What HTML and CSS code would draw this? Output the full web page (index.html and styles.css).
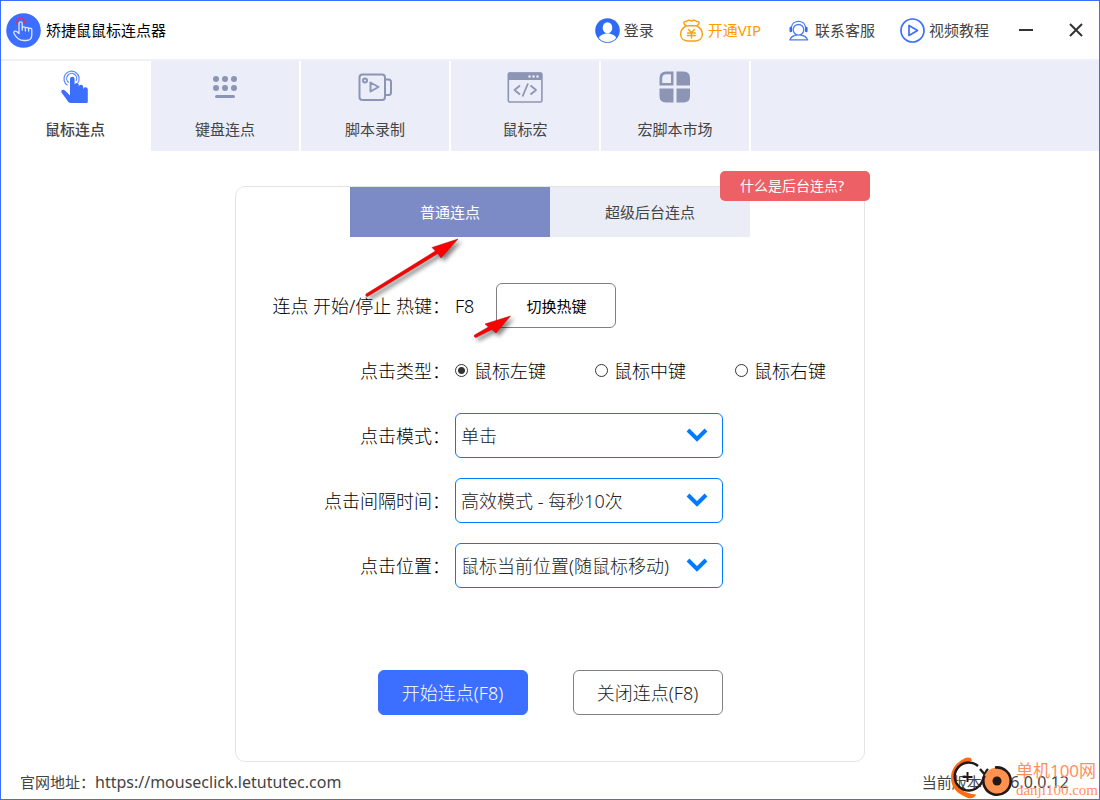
FILE: index.html
```html
<!DOCTYPE html>
<html lang="zh-CN">
<head>
<meta charset="utf-8">
<title>矫捷鼠鼠标连点器</title>
<link rel="stylesheet" href="styles.css">
</head>
<body>
<div class="window">
  <header class="titlebar">
    <svg class="logo" viewBox="0 0 35 35" aria-hidden="true">
      <circle cx="17.5" cy="17.5" r="17.3" fill="#3c6eff"/>
      <path d="M11.500 11.500a4 4 0 1 1 7-1" fill="none" stroke="#e0315c" stroke-width="1.300"/>
      <path d="M13 20.500V10.500a1.600 1.600 0 0 1 3.200 0V17M16.200 15.500a1.600 1.600 0 0 1 3.200 0V18M19.400 16a1.600 1.600 0 0 1 3.200 0V18M22.600 16.500a1.600 1.600 0 0 1 3.200 .500V22C25.800 25.500 24 27.500 20 27.500H18C14 27.500 10 24.500 8 20.500C7 18.500 9.500 17.500 11 18.800L13 20.500" fill="none" stroke="#dfe8ff" stroke-width="1.300" stroke-linejoin="round" stroke-linecap="round"/>
    </svg>
    <h1 class="app-name">矫捷鼠鼠标连点器</h1>
    <nav class="links">
      <a class="link" href="#login">
        <svg class="link-icon" viewBox="0 0 25 25" aria-hidden="true">
          <circle cx="12.500" cy="12.500" r="12.300" fill="#2f6bf2"/>
          <ellipse cx="12.500" cy="9.800" rx="4.800" ry="5.600" fill="#fff"/>
          <path d="M3.800 20C5 17.200 7.500 16.300 10.500 15.500H14.500C17.500 16.300 20 17.200 21.200 20C19 22.800 16 24 12.500 24S6 22.800 3.800 20Z" fill="#fff"/>
        </svg>登录</a>
      <a class="link link-vip" href="#vip">
        <svg class="link-icon" viewBox="0 0 25 25" fill="none" stroke="#f9a11b" stroke-width="1.500" stroke-linecap="round" stroke-linejoin="round" aria-hidden="true">
          <path d="M7.500 7.800C3.500 5.500 4.500 3 7.500 3.600C8.500 1.800 10.800 1.800 12.500 3C14.500 1.800 16.500 1.800 17.500 3.600C20.500 3 21.500 5.500 17.500 7.800ZM7 8C3.500 10 1.600 12.600 1.600 16C1.600 20.500 5 23 9 23H16C20 23 23.400 20.500 23.400 16C23.400 12.600 21.500 10 18 8"/>
          <path d="M9.500 11.500L12.500 14.500L15.500 11.500M8.500 15H16.500M8.500 17.500H16.500M12.500 14.500V20"/>
        </svg>开通VIP</a>
      <a class="link" href="#service">
        <svg class="link-icon" viewBox="0 0 25 25" fill="none" stroke="#4a7cf0" stroke-width="1.300" stroke-linecap="round" aria-hidden="true">
          <circle cx="12.500" cy="11.800" r="5.300"/>
          <path d="M5.500 9C6.500 1.500 18.500 1.500 19.500 9M4 21.600C5 18.800 7.500 17.500 10.500 17M14.500 17C17.500 17.500 20.500 18.800 21.500 21.600M3.800 21.800H21.800"/>
          <path d="M4.800 10V13M20.300 10V13" stroke="#2f6bf2" stroke-width="2.600"/>
        </svg>联系客服</a>
      <a class="link" href="#video">
        <svg class="link-icon" viewBox="0 0 25 25" fill="none" stroke="#3c6eff" stroke-width="1.700" stroke-linejoin="round" aria-hidden="true">
          <circle cx="12.500" cy="12.500" r="11.500"/>
          <path d="M9 7.500V17.500L17.500 12.500Z"/>
        </svg>视频教程</a>
    </nav>
    <div class="window-controls">
      <button class="control" type="button" aria-label="最小化">
        <svg class="control-icon" viewBox="0 0 16 16" aria-hidden="true"><path d="M1 8H15" stroke="#333" stroke-width="2"/></svg>
      </button>
      <button class="control" type="button" aria-label="关闭">
        <svg class="control-icon" viewBox="0 0 16 16" aria-hidden="true"><path d="M2 2L14 14M14 2L2 14" stroke="#333" stroke-width="2"/></svg>
      </button>
    </div>
  </header>

  <nav class="tabs">
    <button class="tab tab-active" type="button">
      <svg class="tab-icon" viewBox="0 0 36 36" aria-hidden="true">
        <g fill="none" stroke="#5a85ff" stroke-width="1.200">
          <path d="M10.500 16.200A7.600 7.600 0 1 1 20.500 14.500"/>
          <path d="M11.800 13.500A5 5 0 1 1 19 12"/>
        </g>
        <path d="M13 10a2.300 2.300 0 0 1 4.600 0V18.500V15.500a2.200 2.200 0 0 1 4.200 0V20V18a2.200 2.200 0 0 1 4.400 0V21.500V20.500a2.200 2.200 0 0 1 4.600 0V32C30.800 33.500 30.500 34 29.500 34H14C12 34 11 33 10 31L4.500 23.500C3.200 21 6.500 20 8 21.500L13 26.500Z" fill="#3c6eff"/>
      </svg>
      <span>鼠标连点</span>
    </button>
    <button class="tab" type="button">
      <svg class="tab-icon" viewBox="0 0 36 36" fill="#8d95b5" aria-hidden="true">
        <circle cx="9" cy="10" r="3"/><circle cx="18" cy="10" r="3"/><circle cx="27" cy="10" r="3"/>
        <circle cx="9" cy="19" r="3"/><circle cx="18" cy="19" r="3"/><circle cx="27" cy="19" r="3"/>
        <rect x="8" y="26" width="20" height="3" rx="1.500"/>
      </svg>
      <span>键盘连点</span>
    </button>
    <button class="tab" type="button">
      <svg class="tab-icon" viewBox="0 0 36 36" fill="none" stroke="#8d95b5" stroke-width="2" stroke-linejoin="round" aria-hidden="true">
        <rect x="2.500" y="5.500" width="25.500" height="25.500" rx="3"/>
        <circle cx="8" cy="11.500" r="2"/>
        <path d="M13.500 13.500V22.500L21.500 18Z"/>
        <path d="M28 10.500H31.500Q34 10.500 34 13V23.500Q34 26 31.500 26H28"/>
      </svg>
      <span>脚本录制</span>
    </button>
    <button class="tab" type="button">
      <svg class="tab-icon" viewBox="0 0 36 36" fill="none" stroke="#8d95b5" stroke-width="1.600" stroke-linejoin="round" aria-hidden="true">
        <rect x="1.300" y="4" width="33.600" height="29" rx="1.500"/>
        <path d="M1 4.500Q1 3.500 2.500 3.500H33.500Q35 3.500 35 4.500V11H1Z" fill="#8d95b5" stroke="none"/>
        <g fill="#fff" stroke="none"><rect x="21.500" y="6.500" width="2" height="2"/><rect x="25.500" y="6.500" width="2" height="2"/><rect x="29.500" y="6.500" width="2" height="2"/></g>
        <path d="M13 16.500L7.500 21L13 25.500M23.500 16.500L29 21L23.500 25.500M21 14.500L15.500 27.500" stroke-width="1.800"/>
      </svg>
      <span>鼠标宏</span>
    </button>
    <button class="tab" type="button">
      <svg class="tab-icon" viewBox="0 0 36 36" fill="#8d95b5" aria-hidden="true">
        <path fill-rule="evenodd" d="M9 2.500H16.500V16.500H2.500V9Q2.500 2.500 9 2.500ZM9.500 5.200Q5.200 5.200 5.200 9.500V14H14V5.200Z"/>
        <path d="M19.500 2.500H26.500Q33 2.500 33 9V16.500H19.500ZM2.500 19.500H16.500V33.500H9Q2.500 33.500 2.500 27ZM19.500 19.500H33V27Q33 33.500 26.500 33.500H19.500Z"/>
      </svg>
      <span>宏脚本市场</span>
    </button>
  </nav>

  <main class="main">
    <section class="card">
      <div class="modes">
        <button class="mode mode-active" type="button">普通连点</button>
        <button class="mode" type="button">超级后台连点</button>
      </div>
      <button class="help-badge" type="button">什么是后台连点?</button>

      <form class="form">
        <div class="row">
          <span class="label">连点 开始/停止 热键：</span>
          <div class="field hotkey">
            <span>F8</span>
            <button class="button button-small" type="button">切换热键</button>
          </div>
        </div>
        <div class="row" role="radiogroup" aria-labelledby="type-label">
          <span class="label" id="type-label">点击类型：</span>
          <div class="field radios">
            <label class="radio"><input type="radio" name="type" checked>鼠标左键</label>
            <label class="radio"><input type="radio" name="type">鼠标中键</label>
            <label class="radio"><input type="radio" name="type">鼠标右键</label>
          </div>
        </div>
        <div class="row">
          <label class="label" for="mode">点击模式：</label>
          <div class="field select-box">
            <select class="select" id="mode"><option>单击</option></select>
            <svg class="chevron" viewBox="0 0 22 14" aria-hidden="true"><path d="M2 2L11 11L20 2" fill="none" stroke="#007bff" stroke-width="4"/></svg>
          </div>
        </div>
        <div class="row">
          <label class="label" for="interval">点击间隔时间：</label>
          <div class="field select-box">
            <select class="select" id="interval"><option>高效模式 - 每秒10次</option></select>
            <svg class="chevron" viewBox="0 0 22 14" aria-hidden="true"><path d="M2 2L11 11L20 2" fill="none" stroke="#007bff" stroke-width="4"/></svg>
          </div>
        </div>
        <div class="row">
          <label class="label" for="position">点击位置：</label>
          <div class="field select-box">
            <select class="select" id="position"><option>鼠标当前位置(随鼠标移动)</option></select>
            <svg class="chevron" viewBox="0 0 22 14" aria-hidden="true"><path d="M2 2L11 11L20 2" fill="none" stroke="#007bff" stroke-width="4"/></svg>
          </div>
        </div>
        <div class="actions">
          <button class="button button-primary" type="button">开始连点(F8)</button>
          <button class="button" type="button">关闭连点(F8)</button>
        </div>
      </form>

      <svg class="arrows" viewBox="0 0 300 170" aria-hidden="true">
        <g fill="#ff0000" stroke="#a01010" stroke-width="0.500" stroke-linejoin="round">
          <path d="M130 107L199.500 64L196 60.500L222 52L205 71L202 66.500L131.500 109.500Q129 109.500 130 107Z"/>
          <path d="M238.500 148L252.500 140L249 137L274.500 129L260 146L256 142.500L240 150.500Q237.500 150.500 238.500 148Z"/>
        </g>
      </svg>
    </section>
  </main>

  <footer class="footer">
    <span>官网地址：<a class="site" href="https://mouseclick.letututec.com">https://mouseclick.letututec.com</a></span>
    <span>当前版本： <span class="version">V6.0.0.12</span></span>
  </footer>

  <div class="watermark">
    <svg class="watermark-logo" viewBox="0 0 64 42" fill="none" aria-hidden="true">
      <path d="M21 1C17 -0.500 14 1 9 5C2 10 0 18 1.500 25C3 33 10 38 18 41C22 42 25 40 26 37.500C15 37 6 31 5.500 21C5 12 11 6 22 4Z" fill="#ff6a13"/>
      <path d="M28 9A14 14 0 1 0 29 29" stroke="#231815" stroke-width="2.400"/>
      <path d="M17.500 15V25M12.500 20H22.500" stroke="#231815" stroke-width="2"/>
      <path d="M30 12L36 19M29 29C34 25 33 17 38 12" stroke="#231815" stroke-width="2.400"/>
      <circle cx="47" cy="24" r="13.500" fill="#ff924f"/>
      <path d="M45 10.500A13.700 13.700 0 1 1 34.500 18.500" stroke="#231815" stroke-width="2.600"/>
      <circle cx="47" cy="24" r="4.500" fill="#231815"/>
    </svg>
    <div class="watermark-text">
      <span class="watermark-name">单机100网</span>
      <span class="watermark-url">danji100.com</span>
    </div>
  </div>
</div>
</body>
</html>
```
FILE: styles.css
```css
* {
  box-sizing: border-box;
}

body {
  margin: 0;
  background: #fff;
  color: #444;
  font-family: "Noto Sans", "Noto Sans CJK SC", sans-serif;
  font-size: 15px;
  line-height: 20px;
}

button,
select {
  font: inherit;
  color: inherit;
  cursor: pointer;
}

.window {
  position: relative;
  display: flex;
  flex-direction: column;
  min-height: 100vh;
  border: 1px solid #3c6eff;
}

.titlebar {
  display: flex;
  align-items: center;
  height: 60px;
  padding-left: 5px;
  border-bottom: 2px solid #f0f0f6;
}

.logo {
  width: 35px;
  height: 35px;
}

.app-name {
  margin: 0 auto 0 5px;
  color: #000;
  font-size: 15px;
  font-weight: 400;
}

.links {
  display: flex;
  gap: 25px;
}

.link {
  display: flex;
  align-items: center;
  gap: 4px;
  color: #444;
  text-decoration: none;
}

.link-vip {
  color: #ff9c00;
}

.link-icon {
  width: 25px;
  height: 25px;
}

.window-controls {
  display: flex;
  gap: 4px;
  margin-left: 14px;
}

.control {
  display: grid;
  place-items: center;
  width: 46px;
  height: 46px;
  padding: 0;
  border: 0;
  background: none;
}

.control-icon {
  width: 16px;
  height: 16px;
}

.tabs {
  display: flex;
  background: #ebedf8;
}

.tab {
  display: flex;
  flex-direction: column;
  align-items: center;
  gap: 14px;
  width: 150px;
  height: 90px;
  padding: 8px 0 0;
  border: 0;
  border-right: 2px solid #fff;
  background: none;
}

.tab-active {
  background: #fff;
  font-weight: 500;
}

.tab-icon {
  width: 36px;
  height: 36px;
}

.main {
  display: flex;
  justify-content: center;
  padding: 35px 20px 10px;
}

.card {
  position: relative;
  width: 630px;
  border: 1px solid #e4e4e4;
  border-radius: 10px;
}

.modes {
  display: flex;
  justify-content: center;
}

.mode {
  width: 200px;
  height: 50px;
  border: 0;
  background: #ebedf6;
}

.mode-active {
  background: #7c8ac5;
  color: #fff;
}

.help-badge {
  position: absolute;
  top: -16px;
  right: -6px;
  width: 150px;
  height: 30px;
  padding: 0 6px 0 0;
  border: 0;
  border-radius: 5px;
  background: #ed6065;
  color: #fff;
  font-size: 14px;
}

.form {
  display: flex;
  flex-direction: column;
  gap: 20px;
  padding: 46px 0;
  color: #000;
  font-size: 18px;
  font-weight: 300;
}

.row {
  display: grid;
  grid-template-columns: 214px 1fr;
  align-items: center;
  gap: 5px;
  min-height: 45px;
}

.label {
  text-align: right;
  white-space: nowrap;
}

.field {
  display: flex;
  align-items: center;
}

.hotkey {
  gap: 22px;
}

.button {
  width: 150px;
  height: 45px;
  padding: 0;
  border: 1px solid #808080;
  border-radius: 6px;
  background: #fff;
  color: #222;
}

.button-small {
  width: 120px;
  color: #000;
  font-size: 15px;
  font-weight: 400;
}

.button-primary {
  border-color: #3c6eff;
  background: #3c6eff;
  color: #fff;
}

.radio {
  display: flex;
  align-items: center;
  gap: 6px;
  width: 140px;
}

.radio input {
  appearance: none;
  width: 13px;
  height: 13px;
  margin: 0;
  border: 1px solid #333;
  border-radius: 50%;
}

.radio input:checked {
  background: radial-gradient(circle, #333 3px, #fff 4px);
}

.radio:last-child {
  width: auto;
}

.select-box {
  position: relative;
  width: 268px;
}

.select {
  appearance: none;
  width: 100%;
  height: 45px;
  padding: 0 40px 0 5px;
  border: 1px solid #007bff;
  border-radius: 6px;
  background: #fff;
  color: #222;
}

.chevron {
  position: absolute;
  top: 15px;
  right: 15px;
  width: 22px;
  height: 14px;
  pointer-events: none;
}

.actions {
  display: flex;
  justify-content: center;
  gap: 45px;
  margin-top: 62px;
}

.arrows {
  position: absolute;
  top: 0;
  left: 0;
  width: 300px;
  height: 170px;
  pointer-events: none;
  filter: drop-shadow(3px 3px 2px rgba(0, 0, 0, 0.5));
}

.footer {
  display: flex;
  justify-content: space-between;
  margin-top: auto;
  padding: 0 30px 7px 19px;
}

.site,
.version {
  color: inherit;
  font-size: 16px;
  text-decoration: none;
}

.watermark {
  position: absolute;
  right: 1px;
  bottom: 0;
  display: flex;
  align-items: center;
  gap: 2px;
}

.watermark-logo {
  width: 64px;
  height: 42px;
}

.watermark-text {
  display: flex;
  flex-direction: column;
  padding-top: 3px;
  color: #ff8f5e;
}

.watermark-name {
  font-size: 17px;
  line-height: 20px;
}

.watermark-url {
  font-family: "Liberation Serif", serif;
  font-size: 15px;
  line-height: 18px;
}
```
